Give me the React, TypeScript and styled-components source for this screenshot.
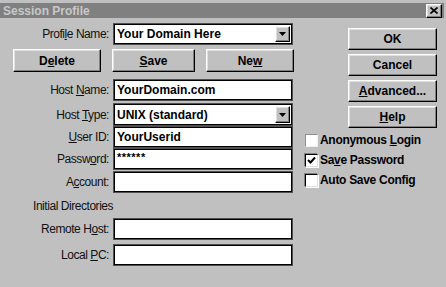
import React from 'react';
import styled, { createGlobalStyle } from 'styled-components';

const GlobalStyle = createGlobalStyle`
  html, body {
    margin: 0;
    padding: 0;
    background: #c0c0c0;
    overflow: hidden;
  }
  body {
    font-family: 'Liberation Sans', Arial, sans-serif;
  }
`;

const raised = `
  border: 1px solid;
  border-color: #ffffff #000000 #000000 #ffffff;
  box-shadow: inset -1px -1px #808080, inset 1px 1px #dfdfdf;
  background: #c0c0c0;
`;

const Window = styled.div`
  width: 446px;
  height: 287px;
  box-sizing: border-box;
  padding: 3px 2px 0 0;
  background: #c0c0c0;
`;

const TitleBar = styled.div`
  height: 15px;
  background: #808080;
  display: flex;
  align-items: center;
  justify-content: space-between;
  padding-left: 3px;
`;

const TitleText = styled.span`
  font-size: 12px;
  font-weight: bold;
  color: #c8c8c8;
`;

const CloseButton = styled.div`
  ${raised}
  box-sizing: border-box;
  width: 16px;
  height: 14px;
  margin-right: 2px;
  display: flex;
  align-items: center;
  justify-content: center;
`;

const Body = styled.div`
  display: flex;
  gap: 11px;
  padding: 6px 0 0 13px;
`;

const LeftCol = styled.div`
  width: 281px;
  display: flex;
  flex-direction: column;
`;

const RightCol = styled.div`
  width: 132px;
  display: flex;
  flex-direction: column;
  align-items: flex-end;
`;

const FieldRow = styled.div<{ $top: number; $h?: number }>`
  display: grid;
  grid-template-columns: 96px 180px;
  column-gap: 4px;
  align-items: center;
  height: ${(p) => p.$h ?? 20}px;
  margin-top: ${(p) => p.$top}px;
`;

const Label = styled.label`
  text-align: right;
  font-size: 12px;
  letter-spacing: -0.45px;
  color: #111;
  white-space: nowrap;
`;

const SectionLabel = styled.div`
  height: 21px;
  margin-top: 4px;
  line-height: 21px;
  padding-left: 20px;
  font-size: 12px;
  letter-spacing: -0.45px;
  color: #111;
`;

const Field = styled.div`
  position: relative;
  box-sizing: border-box;
  height: 100%;
  background: #ffffff;
  border: 1px solid #000;
  box-shadow: 0 0 0 1px #505050;
  margin: 0 1px;
  padding-left: 2px;
  font-size: 12px;
  font-weight: bold;
  color: #000;
  display: flex;
  align-items: center;
  white-space: nowrap;
`;

const Masked = styled.span`
  align-self: flex-start;
  margin-top: 1px;
  font-size: 11px;
  letter-spacing: 0.5px;
`;

const DropButton = styled.div`
  ${raised}
  position: absolute;
  right: 1px;
  top: 1px;
  bottom: 1px;
  width: 15px;
  box-sizing: border-box;
  display: flex;
  align-items: center;
  justify-content: center;
`;

const ButtonRow = styled.div`
  display: flex;
  gap: 11px;
  height: 23px;
  margin-top: 5px;
`;

const Button = styled.div<{ $w: number; $top?: number }>`
  ${raised}
  box-sizing: border-box;
  width: ${(p) => p.$w}px;
  height: ${(p) => (p.$top !== undefined ? 22 : 23)}px;
  margin-top: ${(p) => p.$top ?? 0}px;
  display: flex;
  align-items: center;
  justify-content: center;
  font-size: 12px;
  font-weight: bold;
  color: #000;
`;

const CheckGroup = styled.div`
  align-self: stretch;
  margin-top: 2px;
  display: flex;
  flex-direction: column;
`;

const CheckRow = styled.div`
  height: 20px;
  display: flex;
  align-items: center;
  gap: 2px;
  font-size: 12px;
  font-weight: bold;
  letter-spacing: -0.3px;
  color: #000;
`;

const Box = styled.div<{ $dim?: boolean }>`
  box-sizing: border-box;
  width: 13px;
  height: 13px;
  background: #fff;
  border: 1px solid;
  border-color: ${(p) => (p.$dim ? '#909090 #f0f0f0 #f0f0f0 #909090' : '#000 #e0e0e0 #e0e0e0 #000')};
  box-shadow: ${(p) => (p.$dim ? 'none' : '-1px -1px 0 #808080, 1px 1px 0 #ffffff')};
  display: flex;
  align-items: center;
  justify-content: center;
`;

const Arrow = () => (
  <svg width="7" height="4" viewBox="0 0 7 4">
    <polygon points="0,0 7,0 3.5,4" fill="#000" />
  </svg>
);

const Combo = ({ value }: { value: string }) => (
  <Field>
    {value}
    <DropButton>
      <Arrow />
    </DropButton>
  </Field>
);

const Check = ({ checked, dim, children }: { checked?: boolean; dim?: boolean; children: React.ReactNode }) => (
  <CheckRow>
    <Box $dim={dim}>
      {checked && (
        <svg width="9" height="9" viewBox="0 0 9 9">
          <polyline points="1,4 3.5,6.5 8,1.5" fill="none" stroke="#000" strokeWidth="2" />
        </svg>
      )}
    </Box>
    <span>{children}</span>
  </CheckRow>
);

export default function App() {
  return (
    <>
      <GlobalStyle />
      <Window>
        <TitleBar>
          <TitleText>Session Profile</TitleText>
          <CloseButton>
            <svg width="8" height="7" viewBox="0 0 8 7">
              <path d="M0.5 0.5 L7.5 6.5 M7.5 0.5 L0.5 6.5" stroke="#000" strokeWidth="1.6" />
            </svg>
          </CloseButton>
        </TitleBar>
        <Body>
          <LeftCol>
            <FieldRow $top={0}>
              <Label>
                Profi<u>l</u>e Name:
              </Label>
              <Combo value="Your Domain Here" />
            </FieldRow>
            <ButtonRow>
              <Button $w={88}>
                D<u>e</u>lete
              </Button>
              <Button $w={83}>
                <u>S</u>ave
              </Button>
              <Button $w={88}>
                Ne<u>w</u>
              </Button>
            </ButtonRow>
            <FieldRow $top={8}>
              <Label>
                Host <u>N</u>ame:
              </Label>
              <Field>YourDomain.com</Field>
            </FieldRow>
            <FieldRow $top={4} $h={21}>
              <Label>
                Host <u>T</u>ype:
              </Label>
              <Combo value="UNIX (standard)" />
            </FieldRow>
            <FieldRow $top={2}>
              <Label>
                <u>U</u>ser ID:
              </Label>
              <Field>YourUserid</Field>
            </FieldRow>
            <FieldRow $top={2}>
              <Label>
                Passw<u>o</u>rd:
              </Label>
              <Field>
                <Masked>******</Masked>
              </Field>
            </FieldRow>
            <FieldRow $top={3}>
              <Label>
                A<u>c</u>count:
              </Label>
              <Field />
            </FieldRow>
            <SectionLabel>Initial Directories</SectionLabel>
            <FieldRow $top={2}>
              <Label>
                Remote H<u>o</u>st:
              </Label>
              <Field />
            </FieldRow>
            <FieldRow $top={6}>
              <Label>
                Local <u>P</u>C:
              </Label>
              <Field />
            </FieldRow>
          </LeftCol>
          <RightCol>
            <Button $w={89} $top={4}>
              OK
            </Button>
            <Button $w={89} $top={4}>
              Cancel
            </Button>
            <Button $w={89} $top={4}>
              <u>A</u>dvanced...
            </Button>
            <Button $w={89} $top={4}>
              <u>H</u>elp
            </Button>
            <CheckGroup>
              <Check dim>
                Anonymous <u>L</u>ogin
              </Check>
              <Check checked>
                Sa<u>v</u>e Password
              </Check>
              <Check>Auto Save Config</Check>
            </CheckGroup>
          </RightCol>
        </Body>
      </Window>
    </>
  );
}
